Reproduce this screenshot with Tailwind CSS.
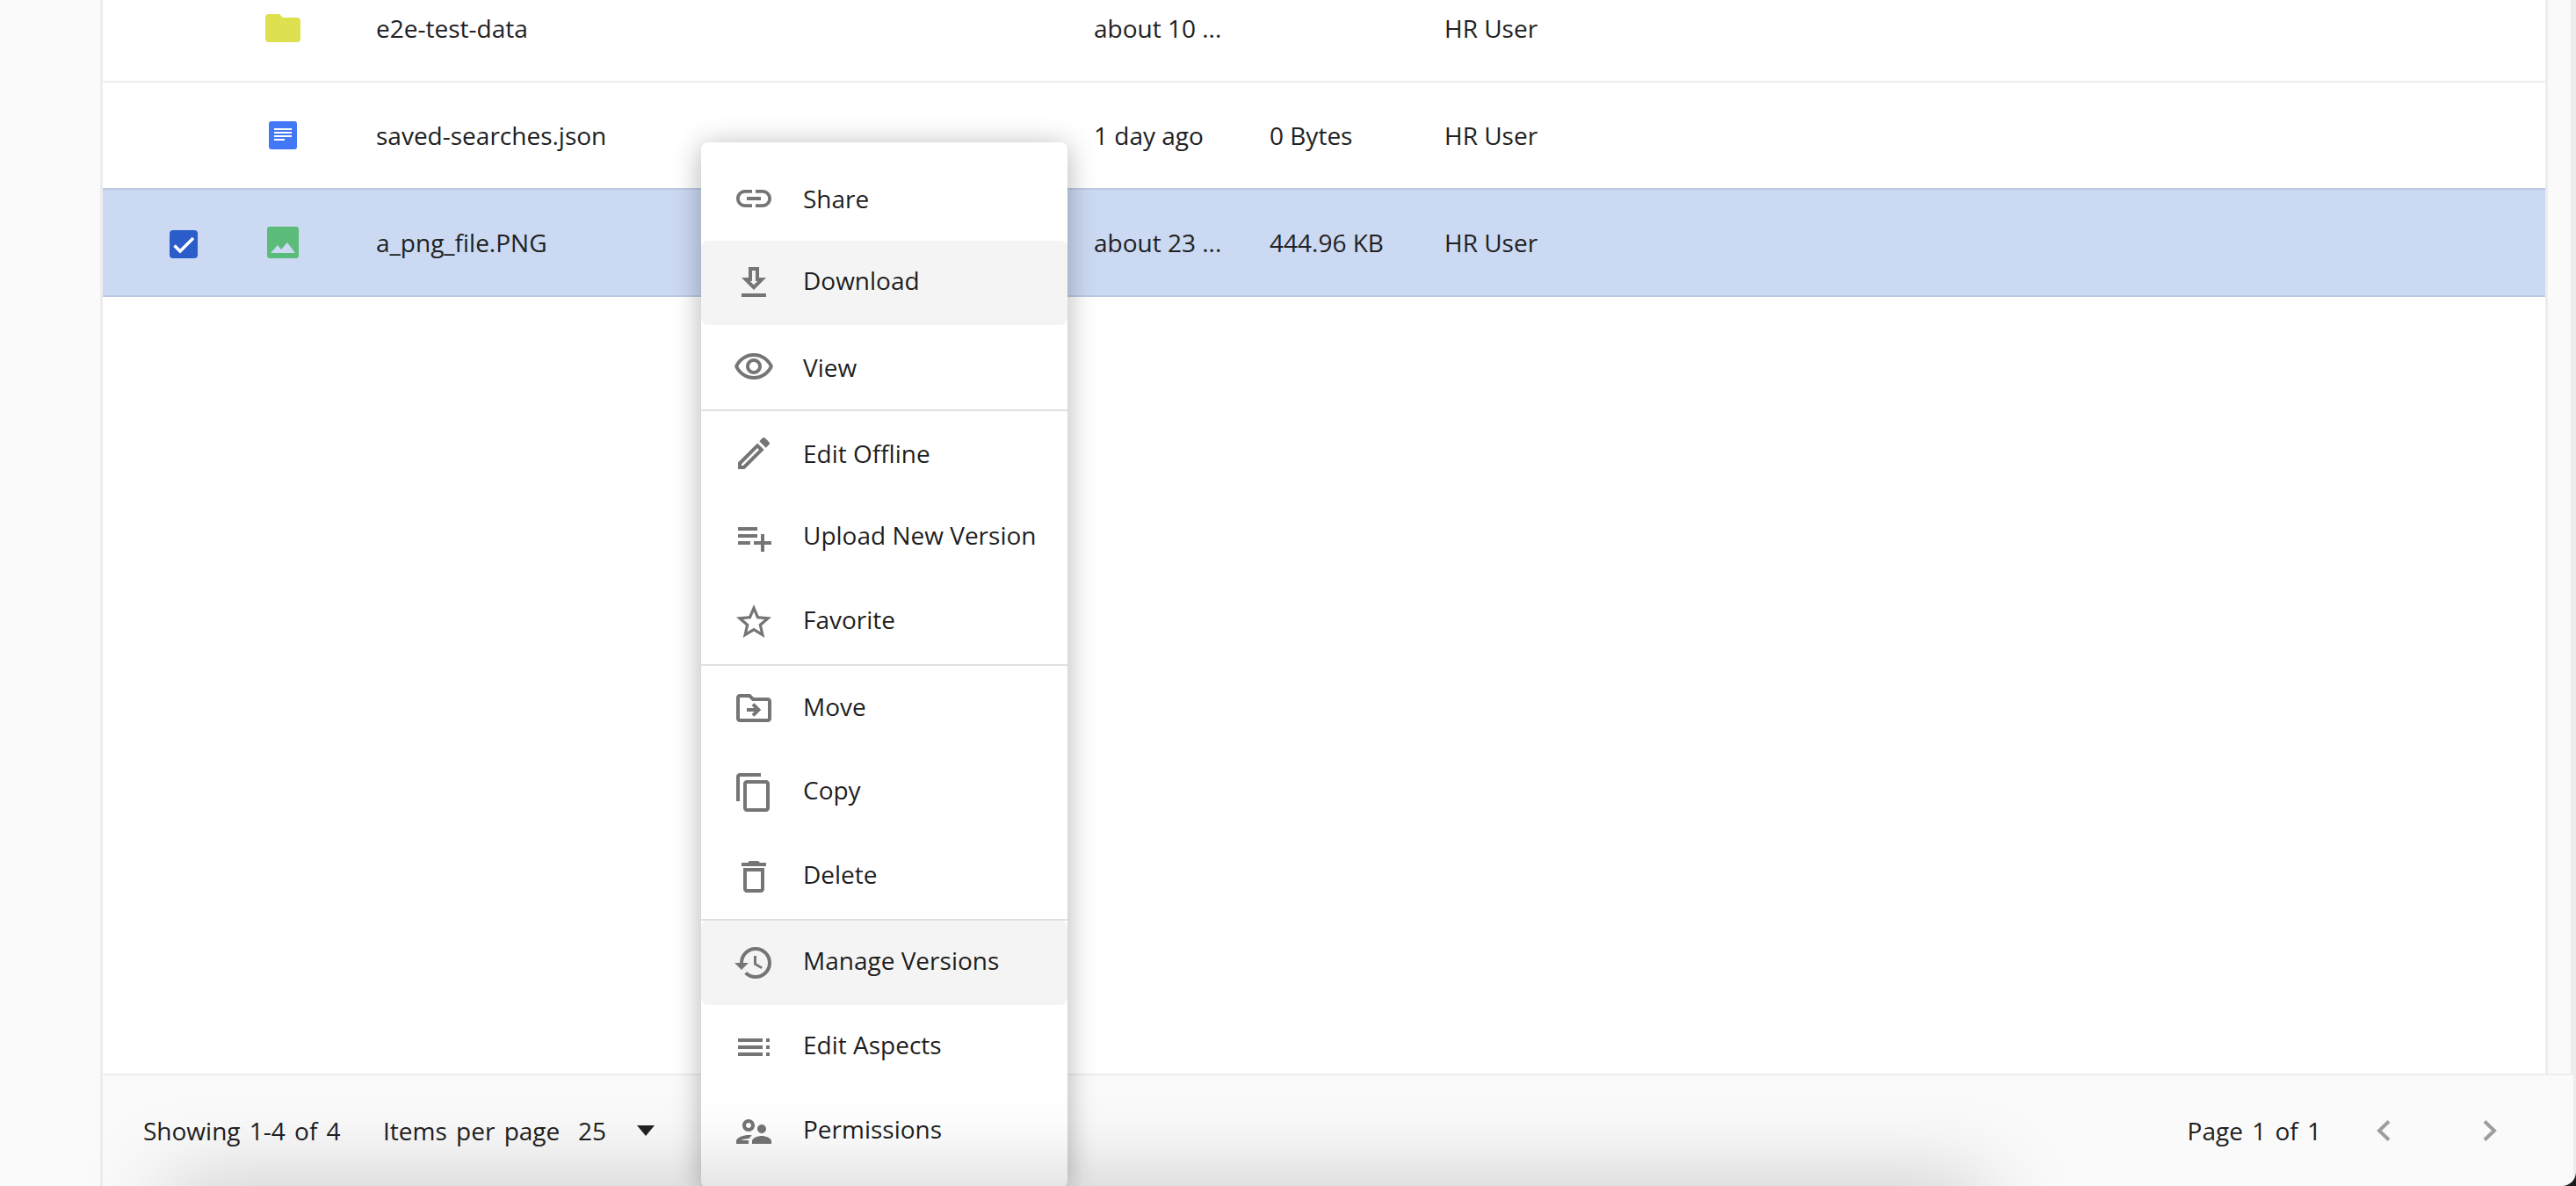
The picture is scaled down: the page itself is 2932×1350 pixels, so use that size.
<!DOCTYPE html>
<html lang="en">
<head>
  <meta charset="UTF-8" />
  <title>Files</title>
  <script src="https://cdn.jsdelivr.net/npm/@tailwindcss/browser@4"></script>
</head>
<body class="bg-[#fafafa] text-[#212121] text-[28px] font-['Open_Sans',sans-serif]">
  <div class="relative h-[1350px] w-[2932px] overflow-hidden">

    <!-- page frame -->
    <div class="flex h-full flex-col">
      <div class="flex flex-1 min-h-0 overflow-hidden">
        <div class="w-[114px] shrink-0"></div>
        <main class="flex-1 min-w-0 border-x-[3px] border-x-[#ededed] bg-white">
          <div class="-mt-[28px]">
            <div class="flex h-[122px] items-center border-b-2 border-b-[#ededed]">
              <div class="w-[144px] shrink-0"></div>
              <div class="flex w-[121px] shrink-0 justify-center">
                <svg class="h-[32px] w-[40px]" viewBox="0 0 40 32"><path fill="#dde04f" d="M4 0h12l4 4h16a4 4 0 0 1 4 4v20a4 4 0 0 1-4 4H4a4 4 0 0 1-4-4V4a4 4 0 0 1 4-4z"/></svg>
              </div>
              <div class="w-[863px] shrink-0 pl-[46px]">e2e-test-data</div>
              <div class="w-[200px] shrink-0">about 10 ...</div>
              <div class="w-[199px] shrink-0"></div>
              <div>HR User</div>
            </div>
            <div class="flex h-[120px] items-center">
              <div class="w-[144px] shrink-0"></div>
              <div class="flex w-[121px] shrink-0 justify-center">
                <svg class="h-[32px] w-[32px]" viewBox="0 0 32 32"><rect width="32" height="32" rx="3" fill="#4277f5"/><path fill="#fff" d="M6 8h20v2H6zM6 12h20v2H6zM6 16h20v2H6zM6 20h12v2H6z"/></svg>
              </div>
              <div class="w-[863px] shrink-0 pl-[46px]">saved-searches.json</div>
              <div class="w-[200px] shrink-0">1 day ago</div>
              <div class="w-[199px] shrink-0">0 Bytes</div>
              <div>HR User</div>
            </div>
            <div class="flex h-[124px] items-center border-y-2 border-y-[#bcc9e3] bg-[#cbd9f2]">
              <div class="flex w-[144px] shrink-0 justify-end pr-[36px]">
                <span class="mt-[4px] flex h-[32px] w-[32px] items-center justify-center rounded-[4px] bg-[#2a5dca]">
                  <svg class="h-[32px] w-[32px]" viewBox="0 0 32 32"><path d="M5.500 17.500l6.500 6.500L27 9" fill="none" stroke="#fff" stroke-width="3.500"/></svg>
                </span>
              </div>
              <div class="flex w-[121px] shrink-0 justify-center">
                <svg class="h-[36px] w-[36px]" viewBox="0 0 36 36"><rect width="36" height="36" rx="3" fill="#5bbc7a"/><path fill="#cbd9f2" d="M4 30l8-9 4 5 7-8 9 12z"/></svg>
              </div>
              <div class="w-[863px] shrink-0 pl-[46px]">a_png_file.PNG</div>
              <div class="w-[200px] shrink-0">about 23 ...</div>
              <div class="w-[199px] shrink-0">444.96 KB</div>
              <div>HR User</div>
            </div>
          </div>
        </main>
        <div class="w-[26px] shrink-0"></div>
        <div class="w-[6px] shrink-0 bg-[#ededed]"></div>
      </div>

      <!-- pagination -->
      <footer class="ml-[114px] flex h-[128px] shrink-0 items-center border-t-2 border-t-[#ededed] border-x-[3px] border-l-[#ededed] border-r-[#ededed] pb-[1px] pr-[86px] [word-spacing:3px]">
        <div class="ml-[46px] w-[273px]">Showing 1-4 of 4</div>
        <div class="w-[222px]">Items per page</div>
        <div class="w-[67px]">25</div>
        <svg class="h-[12px] w-[20px]" viewBox="0 0 20 12"><path d="M0 0h20L10 12z" fill="#212121"/></svg>
        <div class="ml-auto">Page 1 of 1</div>
        <svg class="ml-[62px] h-[24px] w-[17px]" viewBox="0 0 17 24"><path d="M15 1.500L4 12l11 10.500" fill="none" stroke="#9e9e9e" stroke-width="4"/></svg>
        <svg class="ml-[105px] h-[24px] w-[17px]" viewBox="0 0 17 24"><path d="M2 1.500L13 12 2 22.500" fill="none" stroke="#9e9e9e" stroke-width="4"/></svg>
      </footer>
    </div>

    <!-- context menu -->
    <div class="absolute left-[798px] top-[162px] w-[417px] rounded-[8px] bg-white pt-[16px] pb-[16px] text-black/90 shadow-[0_4px_32px_rgba(0,0,0,0.3)]">
      <div class="flex h-[96px] items-center">
        <svg class="ml-[36px] h-[48px] w-[48px]" viewBox="0 0 24 24" fill="#757575"><path d="M3.900 12c0-1.710 1.390-3.100 3.100-3.100h4V7H7c-2.760 0-5 2.240-5 5s2.240 5 5 5h4v-1.900H7c-1.710 0-3.100-1.390-3.100-3.100zM8 13h8v-2H8v2zm9-6h-4v1.900h4c1.710 0 3.100 1.390 3.100 3.100s-1.390 3.100-3.100 3.100h-4V17h4c2.760 0 5-2.240 5-5s-2.240-5-5-5z"/></svg>
        <span class="ml-[32px]">Share</span>
      </div>
      <div class="flex h-[96px] items-center rounded-[8px] bg-[#f4f4f4]">
        <svg class="ml-[36px] h-[48px] w-[48px]" viewBox="0 0 24 24" fill="#757575"><path d="M19 9h-4V3H9v6H5l7 7 7-7zm-8 2V5h2v6h1.170L12 13.170 9.830 11H11zm-6 7h14v2H5z"/></svg>
        <span class="ml-[32px] pb-[6px]">Download</span>
      </div>
      <div class="flex h-[96px] items-center">
        <svg class="ml-[36px] h-[48px] w-[48px]" viewBox="0 0 24 24" fill="#757575"><path d="M12 6c3.790 0 7.170 2.130 8.820 5.500C19.170 14.870 15.790 17 12 17s-7.170-2.130-8.820-5.500C4.830 8.130 8.210 6 12 6m0-2C7 4 2.730 7.110 1 11.500 2.730 15.890 7 19 12 19s9.270-3.110 11-7.500C21.270 7.110 17 4 12 4zm0 5c1.380 0 2.500 1.120 2.500 2.500S13.380 14 12 14s-2.500-1.120-2.500-2.500S10.620 9 12 9m0-2c-2.480 0-4.500 2.020-4.500 4.500S9.520 16 12 16s4.500-2.020 4.500-4.500S14.480 7 12 7z"/></svg>
        <span class="ml-[32px]">View</span>
      </div>
      <div class="h-[2px] bg-[#e0e0e0]"></div>
      <div class="flex h-[96px] items-center">
        <svg class="ml-[36px] h-[48px] w-[48px]" viewBox="0 0 24 24" fill="#757575"><path d="M14.060 9.020l.92.920L5.920 19H5v-.920l9.060-9.060M17.660 3c-.25 0-.51.100-.7.290l-1.830 1.830 3.750 3.750 1.830-1.830c.39-.39.390-1.020 0-1.410l-2.340-2.340c-.2-.2-.45-.29-.71-.29zm-3.600 3.190L3 17.250V21h3.750L17.810 9.940l-3.750-3.750z"/></svg>
        <span class="ml-[32px]">Edit Offline</span>
      </div>
      <div class="flex h-[96px] items-center">
        <svg class="ml-[36px] h-[48px] w-[48px]" viewBox="0 0 24 24" fill="#757575"><path d="M14 10H3v2h11v-2zm0-4H3v2h11V6zm4 8v-4h-2v4h-4v2h4v4h2v-4h4v-2h-4zM3 16h7v-2H3v2z"/></svg>
        <span class="ml-[32px] pb-[6px]">Upload New Version</span>
      </div>
      <div class="flex h-[96px] items-center">
        <svg class="ml-[36px] h-[48px] w-[48px]" viewBox="0 0 24 24" fill="#757575"><path d="M22 9.240l-7.190-.620L12 2 9.190 8.630 2 9.240l5.460 4.730L5.820 21 12 17.270 18.180 21l-1.630-7.030L22 9.240zM12 15.400l-3.760 2.270 1-4.280-3.320-2.880 4.380-.380L12 6.100l1.710 4.040 4.380.380-3.320 2.880 1 4.280L12 15.400z"/></svg>
        <span class="ml-[32px] pb-[6px]">Favorite</span>
      </div>
      <div class="h-[2px] bg-[#e0e0e0]"></div>
      <div class="flex h-[96px] items-center">
        <svg class="ml-[36px] h-[48px] w-[48px]" viewBox="0 0 24 24"><path fill="#757575" d="M20 6h-8l-2-2H4c-1.100 0-2 .900-2 2v12c0 1.100.900 2 2 2h16c1.100 0 2-.900 2-2V8c0-1.100-.900-2-2-2zm0 12H4V6h5.170l2 2H20v10z"/><path d="M8 13h6.500M11.500 9.800l3.200 3.200-3.200 3.200" fill="none" stroke="#757575" stroke-width="2"/></svg>
        <span class="ml-[32px] pb-[4px]">Move</span>
      </div>
      <div class="flex h-[96px] items-center">
        <svg class="ml-[36px] h-[48px] w-[48px]" viewBox="0 0 24 24" fill="#757575"><path d="M16 1H4c-1.100 0-2 .900-2 2v14h2V3h12V1zm3 4H8c-1.100 0-2 .900-2 2v14c0 1.100.900 2 2 2h11c1.100 0 2-.900 2-2V7c0-1.100-.900-2-2-2zm0 16H8V7h11v14z"/></svg>
        <span class="ml-[32px] pb-[6px]">Copy</span>
      </div>
      <div class="flex h-[96px] items-center">
        <svg class="ml-[36px] h-[48px] w-[48px]" viewBox="0 0 24 24" fill="#757575"><path d="M6 19c0 1.100.900 2 2 2h8c1.100 0 2-.900 2-2V7H6v12zM8 9h8v10H8V9zm7.500-5l-1-1h-5l-1 1H5v2h14V4h-3.500z"/></svg>
        <span class="ml-[32px] pb-[6px]">Delete</span>
      </div>
      <div class="h-[2px] bg-[#e0e0e0]"></div>
      <div class="flex h-[96px] items-center rounded-[8px] bg-[#f4f4f4]">
        <svg class="ml-[36px] h-[48px] w-[48px]" viewBox="0 0 24 24" fill="#757575"><path d="M13 3a9 9 0 0 0-9 9H1l3.890 3.890.070.140L9 12H6c0-3.870 3.130-7 7-7s7 3.130 7 7-3.130 7-7 7c-1.930 0-3.680-.790-4.940-2.060l-1.420 1.420A8.954 8.954 0 0 0 13 21a9 9 0 0 0 0-18zm-1 5v5l4.280 2.540.720-1.210-3.500-2.080V8H12z"/></svg>
        <span class="ml-[32px] pb-[6px]">Manage Versions</span>
      </div>
      <div class="flex h-[96px] items-center">
        <svg class="ml-[36px] h-[48px] w-[48px]" viewBox="0 0 24 24" fill="#757575"><path d="M3 7h14v2H3zM3 11h14v2H3zM3 15h14v2H3zM19 7h2v2h-2zM19 11h2v2h-2zM19 15h2v2h-2z"/></svg>
        <span class="ml-[32px] pb-[6px]">Edit Aspects</span>
      </div>
      <div class="flex h-[96px] items-center">
        <svg class="ml-[36px] h-[48px] w-[48px]" viewBox="0 0 24 24" fill="#757575"><path d="M9 12c1.930 0 3.500-1.570 3.500-3.500S10.930 5 9 5 5.500 6.570 5.500 8.500 7.070 12 9 12zm0-5c.830 0 1.500.670 1.500 1.500S9.830 10 9 10s-1.500-.670-1.500-1.500S8.170 7 9 7zm.050 10H4.770c.990-.500 2.700-1 4.230-1 .110 0 .230.010.340.010.340-.730.930-1.330 1.640-1.810-.730-.130-1.420-.200-1.980-.200-2.340 0-7 1.170-7 3.500V19h7v-1.500c0-.170.020-.340.050-.500zm7.450-2.500c-1.840 0-5.500 1.010-5.500 3V19h11v-1.500c0-1.990-3.660-3-5.500-3zm1.210-1.820c.760-.430 1.290-1.240 1.290-2.180C19 9.120 17.880 8 16.500 8S14 9.120 14 10.500c0 .940.530 1.750 1.290 2.180.360.200.770.320 1.210.320s.850-.120 1.210-.320z"/></svg>
        <span class="ml-[32px] pb-[6px]">Permissions</span>
      </div>
    </div>

    <!-- bar below the fold, only its shadow shows -->
    <div class="absolute left-[190px] top-[1352px] h-[60px] w-[2070px] bg-white shadow-[0_0_100px_rgba(0,0,0,0.26)]"></div>

    <!-- window corner -->
    <div class="absolute bottom-0 right-0 h-[16px] w-[16px] overflow-hidden">
      <div class="h-[32px] w-[32px] -translate-x-[16px] -translate-y-[16px] rounded-full shadow-[0_0_0_20px_#1c1c1e]"></div>
    </div>
  </div>
</body>
</html>
